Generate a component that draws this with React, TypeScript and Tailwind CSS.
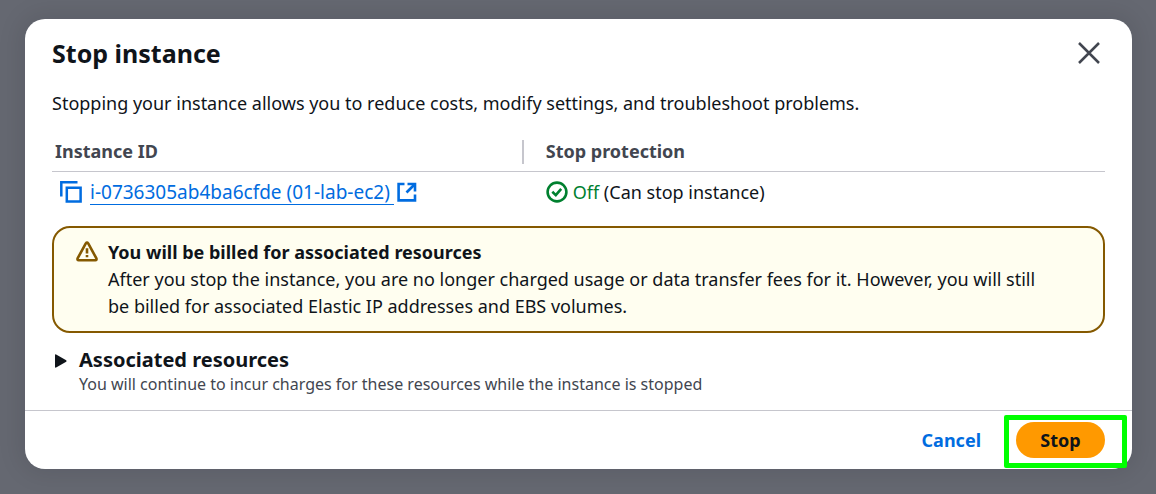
import React from "react";

function CopyIcon() {
  return (
    <svg width="22" height="22" viewBox="0 0 22 22" fill="none" stroke="currentColor" strokeWidth="2.5" aria-hidden="true">
      <path d="M1.3 15.5V1.3H17.5" />
      <path d="M6.8 6.8H20.6V20.6H6.8Z" />
    </svg>
  );
}

function ExternalIcon() {
  return (
    <svg width="20" height="20" viewBox="0 0 20 20" fill="none" stroke="currentColor" strokeWidth="2.6" aria-hidden="true">
      <path d="M7.5 2H1.6V18.4H18V12.5" />
      <path d="M10.5 2H18V9.5" />
      <path d="M18 2L9.5 10.5" />
    </svg>
  );
}

function CheckIcon() {
  return (
    <svg width="22" height="22" viewBox="0 0 22 22" fill="none" stroke="currentColor" strokeWidth="2.6" aria-hidden="true">
      <circle cx="11" cy="11" r="9.4" />
      <path d="M6.3 10.8L9.8 14.1L15.2 7.8" />
    </svg>
  );
}

function WarningIcon() {
  return (
    <svg width="22" height="22" viewBox="0 0 22 22" fill="none" stroke="currentColor" strokeWidth="2.6" aria-hidden="true">
      <path d="M9.8 2.4Q11 .7 12.2 2.4L20.4 17.4Q20.9 19.2 19.3 19.3H2.7Q1.1 19.2 1.6 17.4Z" strokeLinejoin="round" />
      <path d="M11 7.2V12.4M11 14V16.2" />
    </svg>
  );
}

function CloseIcon() {
  return (
    <svg width="24" height="24" viewBox="0 0 24 24" fill="none" stroke="currentColor" strokeWidth="2.5" aria-hidden="true">
      <path d="M2 2L22 22M22 2L2 22" />
    </svg>
  );
}

export default function App() {
  return (
    <div className="min-h-screen bg-[#656871] px-6 pt-[19px] pb-[25px] font-['Noto_Sans','Open_Sans',sans-serif] text-lg leading-[27px] text-[#0f141a]">
      <div
        role="dialog"
        aria-modal="true"
        aria-labelledby="dialog-title"
        className="ml-px rounded-[20px] bg-white shadow-[0_0_24px_4px_rgba(0,7,22,0.1)]"
      >
        <header className="flex items-center justify-between px-[27px] pt-4">
          <h1 id="dialog-title" className="text-[25px] leading-9 font-bold">Stop instance</h1>
          <button type="button" aria-label="Close" className="mr-1 text-[#424650]">
            <CloseIcon />
          </button>
        </header>

        <main className="px-[27px] pt-[19px] pb-[15px]">
          <p>Stopping your instance allows you to reduce costs, modify settings, and troubleshoot problems.</p>

          <table className="mt-4 w-full table-fixed border-collapse text-left">
            <thead>
              <tr className="border-b border-[#c6c6cd] text-[#424650]">
                <th scope="col" className="h-[38px] w-[44.8%] p-0 font-bold">
                  <div className="flex h-6 items-center border-r-2 border-[#c6c6cd] pl-[3px]">Instance ID</div>
                </th>
                <th scope="col" className="h-[38px] p-0 pl-[22px] font-bold">Stop protection</th>
              </tr>
            </thead>
            <tbody>
              <tr>
                <td className="h-[42px] p-0 pl-2">
                  <div className="flex items-center text-[#006ce0]">
                    <button type="button" aria-label="Copy instance ID" className="mr-2">
                      <CopyIcon />
                    </button>
                    <a href="#instance" className="flex items-center text-[19px]">
                      <span className="border-b border-[#006ce0] pr-1 leading-6">i-0736305ab4ba6cfde (01-lab-ec2)</span>
                      <span className="ml-[3px]">
                        <ExternalIcon />
                      </span>
                    </a>
                  </div>
                </td>
                <td className="h-[42px] p-0 pl-[22px]">
                  <div className="flex items-center">
                    <span className="mr-[5px] text-[#00802f]">
                      <CheckIcon />
                    </span>
                    <span>
                      <span className="text-[#00802f]">Off</span> (Can stop instance)
                    </span>
                  </div>
                </td>
              </tr>
            </tbody>
          </table>

          <section className="mt-[13px] flex rounded-[18px] border-2 border-[#855900] bg-[#fffef0] px-[22px] py-[11px]">
            <span className="mt-[2px] mr-[10px] shrink-0 text-[#855900]">
              <WarningIcon />
            </span>
            <div className="pr-8">
              <h2 className="font-bold">You will be billed for associated resources</h2>
              <p>
                After you stop the instance, you are no longer charged usage or data transfer fees for it. However, you will
                still be billed for associated Elastic IP addresses and EBS volumes.
              </p>
            </div>
          </section>

          <button type="button" aria-expanded="false" className="mt-[14px] flex items-start text-left">
            <svg width="12" height="14" viewBox="0 0 12 14" fill="currentColor" className="mt-[7px] mr-[12px] ml-[3px]" aria-hidden="true">
              <path d="M0 1.2Q0 0 1.1 .5L11.2 6.2Q12 7 11.2 7.8L1.1 13.5Q0 14 0 12.8Z" />
            </svg>
            <span>
              <span className="block text-xl leading-[26px] font-bold">Associated resources</span>
              <span className="block text-base leading-[22px] text-[#424650]">
                You will continue to incur charges for these resources while the instance is stopped
              </span>
            </span>
          </button>
        </main>

        <footer className="flex items-center justify-end border-t border-[#c6c6cd] pt-1 pr-[5px] pb-px font-bold">
          <button type="button" className="px-[23px] pb-[3px] text-[#006ce0]">Cancel</button>
          <div className="flex rounded-[2px] border-[5px] border-[#00ff00] pt-[2px] pr-[17px] pb-[5px] pl-[7px]">
            <button type="button" className="h-9 min-w-[89px] rounded-full bg-[#ff9900] px-5 text-[#0f141a]">Stop</button>
          </div>
        </footer>
      </div>
    </div>
  );
}
